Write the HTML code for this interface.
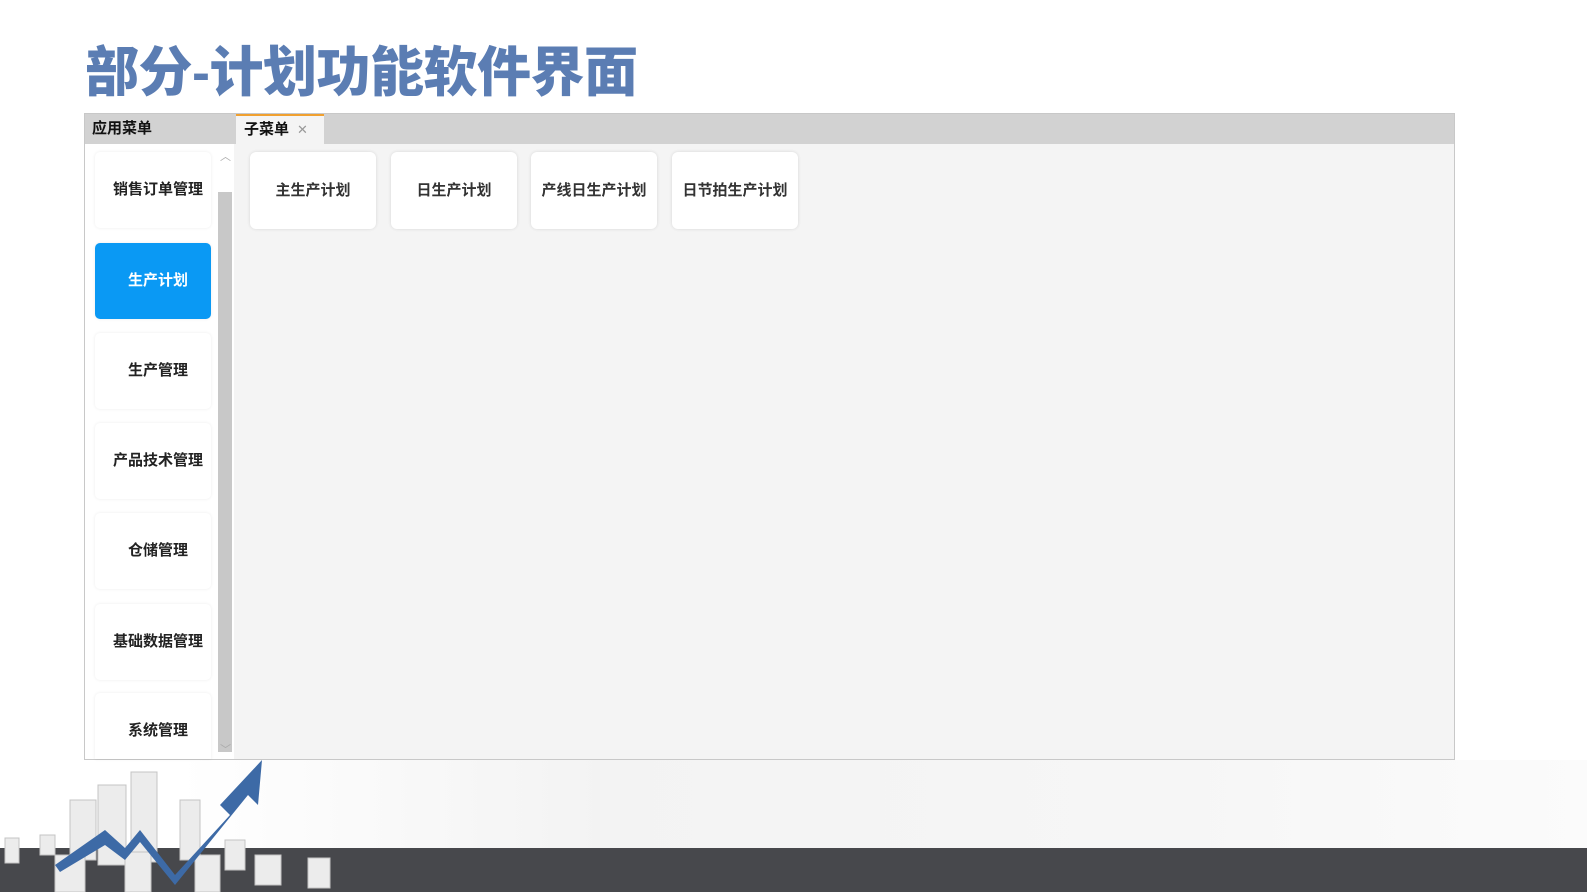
<!DOCTYPE html>
<html><head><meta charset="utf-8"><style>
body{margin:0;width:1587px;height:892px;background:#fff;position:relative;overflow:hidden;font-family:"Liberation Sans","Noto Sans CJK SC",sans-serif}
.t{position:absolute;left:85px;top:38px;font-size:54px;font-weight:900;color:#5b7db3;line-height:70px;letter-spacing:-0.5px}
.win{position:absolute;left:84px;top:113px;width:1369px;height:645px;border:1px solid #c8c8c8;background:#f4f4f4}
.hd{position:absolute;left:0;top:0;width:1369px;height:30px;background:#d2d2d2}
.lt{position:absolute;left:0;top:0;width:149px;height:30px;background:#d2d2d2;font-size:15px;font-weight:bold;line-height:30px;padding-left:7px;color:#111}
.side{position:absolute;left:0;top:30px;width:149px;height:615px;background:#fff}
.tab{position:absolute;left:151px;top:0;width:88px;height:30px;background:#f4f4f4;border-top:2px solid #f0a030;box-sizing:border-box;font-size:15px;font-weight:bold;line-height:28px;padding-left:8px;color:#111}
.tab span{color:#999;margin-left:8px;font-size:13px;font-weight:normal}
.it{position:absolute;left:10px;width:116px;height:76px;background:#fff;border-radius:5px;box-shadow:0 0 3px rgba(0,0,0,.08);font-size:15px;font-weight:bold;line-height:76px;text-align:center;color:#222;padding-left:10px;box-sizing:border-box;white-space:nowrap}
.act{background:#0a99f4;color:#fff}
.sb{position:absolute;left:133px;top:48px;width:14px;height:560px;background:#c8c8c8}
.card{position:absolute;top:38px;width:126px;height:77px;background:#fff;border-radius:6px;box-shadow:0 0 3px rgba(0,0,0,.12);font-size:15px;font-weight:bold;line-height:77px;text-align:center;color:#333;white-space:nowrap}
.band{position:absolute;left:0;top:848px;width:1587px;height:44px;background:#47484c}
.bg{position:absolute;left:180px;top:760px;width:1407px;height:88px;background:linear-gradient(90deg,#fff,#f3f3f3 30%,#f6f6f6 70%,#fbfbfb)}
</style></head><body>
<div class="t">部分-计划功能软件界面</div>
<div class="bg"></div>
<div class="band"></div>
<svg style="position:absolute;left:0;top:760px" width="340" height="132">
<g fill="#ececec" stroke="#c4c4c4" stroke-width="1">
<rect x="70" y="40" width="26" height="60"/><rect x="98" y="25" width="28" height="80"/><rect x="131" y="12" width="26" height="90"/><rect x="180" y="40" width="20" height="60"/><rect x="5" y="78" width="14" height="25"/><rect x="40" y="75" width="15" height="20"/><rect x="55" y="95" width="30" height="37"/><rect x="125" y="92" width="26" height="40"/><rect x="195" y="95" width="25" height="37"/><rect x="225" y="80" width="20" height="30"/><rect x="255" y="95" width="26" height="30"/><rect x="308" y="98" width="22" height="30"/>
</g>
<polygon points="55,105 105,70 125,88 140,70 175,115 230,55 220,45 262,0 258,45 248,35 175,125 140,82 125,100 105,85 60,112" fill="#3d6aa6"/>
</svg>
<div class="win">
<div class="hd"></div>
<div class="lt">应用菜单</div>
<div class="side">
<div class="it" style="top:8px">销售订单管理</div>
<div class="it act" style="top:99px">生产计划</div>
<div class="it" style="top:189px">生产管理</div>
<div class="it" style="top:279px">产品技术管理</div>
<div class="it" style="top:369px">仓储管理</div>
<div class="it" style="top:460px">基础数据管理</div>
<div class="it" style="top:549px;height:66px;line-height:76px;border-radius:5px 5px 0 0">系统管理</div>
<div class="sb"></div>
<div style="position:absolute;left:135px;top:4px;color:#aaa;font-size:11px">︿</div>
<div style="position:absolute;left:135px;top:597px;color:#aaa;font-size:11px">﹀</div>
</div>
<div class="tab">子菜单<span>✕</span></div>
<div class="card" style="left:165px">主生产计划</div>
<div class="card" style="left:306px">日生产计划</div>
<div class="card" style="left:446px">产线日生产计划</div>
<div class="card" style="left:587px">日节拍生产计划</div>
</div>
</body></html>
